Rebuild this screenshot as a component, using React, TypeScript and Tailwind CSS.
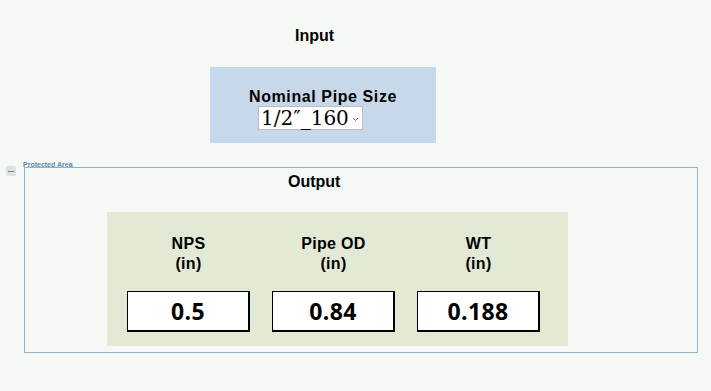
const columns = [
  { label: 'NPS', unit: '(in)', value: '0.5' },
  { label: 'Pipe OD', unit: '(in)', value: '0.84' },
  { label: 'WT', unit: '(in)', value: '0.188' },
]

function ValueCell({ label, unit, value }: { label: string; unit: string; value: string }) {
  return (
    <div className="flex w-[123px] flex-col items-center">
      <div className="mt-[22px] text-center text-[16px] font-bold leading-[20px] tracking-[0.3px] text-black">
        <div>{label}</div>
        <div>{unit}</div>
      </div>
      <div className="mt-[17px] flex h-[41px] w-full items-center justify-center border border-black border-r-2 border-b-2 bg-white">
        <span className="font-['Open_Sans',sans-serif] text-[23px] font-bold leading-none tracking-[0.4px] text-black">{value}</span>
      </div>
    </div>
  )
}

function App() {
  return (
    <main className="h-[391px] w-[711px] overflow-hidden bg-[#f5f9f6] font-['Liberation_Sans',Arial,sans-serif]">
      <div className="flex flex-col pt-[27px]">
        <h1 className="ml-[295px] text-[16px] font-bold leading-[18px] text-black">Input</h1>
        <section className="ml-[210px] mt-[22px] flex h-[76px] w-[226px] flex-col items-start bg-[#c8d8eb] pl-[39px] pt-[21px]">
          <h2 className="text-[16px] font-bold leading-[18px] tracking-[0.6px] text-black">Nominal Pipe Size</h2>
          <div className="ml-[9px] flex h-[24px] items-center border border-[#bcbcbc] bg-white pl-[2px] pr-[3px]">
            <span className="font-['DejaVu_Serif','Liberation_Serif',serif] text-[20px] leading-[22px] text-black">
              1/2″_160
            </span>
            <svg width="7" height="5" viewBox="0 0 7 5" className="ml-[3px] mt-[2px]">
              <path d="M1 1 L3.5 3.5 L6 1" fill="none" stroke="#555" strokeWidth="1" />
            </svg>
          </div>
        </section>
      </div>

      <div className="mt-[19px] flex">
        <div className="ml-[6px] mt-[4px] flex h-[10px] w-[10px] items-center justify-center rounded-[2px] bg-[#dde2e6]">
          <div className="h-[1px] w-[6px] bg-[#6f8799]" />
        </div>
        <div className="ml-[7px] flex flex-col">
          <span className="text-[7px] font-semibold leading-[6px] text-[#5a86a8]">Protected Area</span>
          <div className="mt-[-1px] ml-[1px] flex h-[186px] w-[674px] flex-col border border-[#8fb3c9]">
            <h2 className="ml-[263px] mt-[5px] text-[16px] font-bold leading-[18px] text-black">Output</h2>
            <section className="ml-[82px] mt-[21px] flex h-[134px] w-[461px] gap-[22px] bg-[#e2ead5] pl-[20px]">
              {columns.map((column) => (
                <ValueCell key={column.label} {...column} />
              ))}
            </section>
          </div>
        </div>
      </div>
    </main>
  )
}

export default App
